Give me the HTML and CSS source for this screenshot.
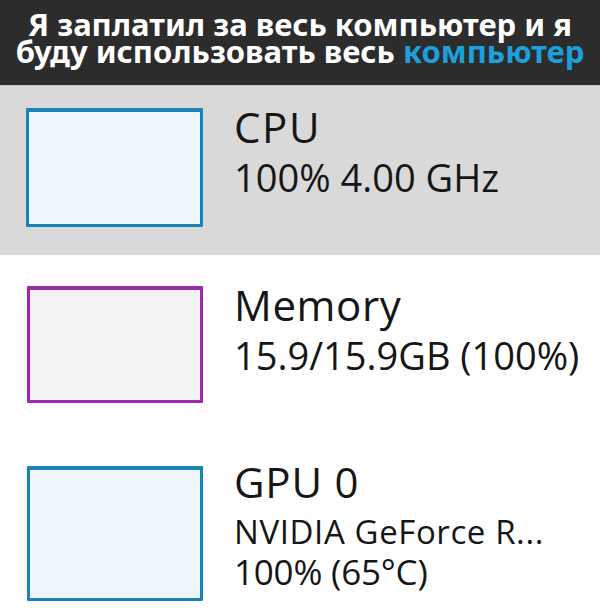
FILE: index.html
```html
<!DOCTYPE html>
<html lang="ru">
<head>
<meta charset="utf-8">
<title>Task Manager</title>
<link rel="stylesheet" href="styles.css">
</head>
<body>
<header class="header">
  <p class="line">Я заплатил за весь компьютер и я</p>
  <p class="line">буду использовать весь <span class="accent">компьютер</span></p>
</header>
<main class="list">
  <section class="row row-selected row-cpu">
    <div class="graph graph-blue"></div>
    <div class="info">
      <div class="title title-cpu">CPU</div>
      <div class="sub">100% 4.00 GHz</div>
    </div>
  </section>
  <section class="row row-mem">
    <div class="graph graph-purple"></div>
    <div class="info">
      <div class="title">Memory</div>
      <div class="sub">15.9/15.9GB (100%)</div>
    </div>
  </section>
  <section class="row row-gpu">
    <div class="graph graph-blue graph-tall"></div>
    <div class="info">
      <div class="title title-gpu">GPU 0</div>
      <div class="sub sub-name">NVIDIA GeForce R...</div>
      <div class="sub sub-last">100% (65°C)</div>
    </div>
  </section>
</main>
</body>
</html>
```
FILE: styles.css
```css
html, body {
  margin: 0;
  padding: 0;
  background: #ffffff;
  width: 600px;
  height: 613px;
  overflow: hidden;
}

.header {
  background: #2c2c2c;
  height: 86px;
  box-sizing: border-box;
  padding-top: 11px;
  border-bottom: 1px solid #c4c4c4;
  text-align: center;
  color: #ffffff;
  font-family: "Noto Sans", "DejaVu Sans", sans-serif;
  font-weight: 700;
  font-size: 31px;
  line-height: 27px;
}

.line {
  margin: 0;
  white-space: nowrap;
}

.accent {
  color: #1ca0dc;
}

.list {
  font-family: "Open Sans", "Noto Sans", sans-serif;
  color: #161616;
}

.row {
  display: flex;
  align-items: flex-start;
  gap: 31px;
  padding-left: 26px;
  box-sizing: border-box;
}

.row-selected {
  background: #d9d9d9;
}

.row-cpu {
  height: 169px;
  padding-top: 22px;
}

.row-mem {
  height: 185px;
  padding-top: 31px;
  padding-left: 27px;
}

.row-gpu {
  padding-top: 26px;
  padding-left: 27px;
}

.graph {
  width: 177px;
  height: 119px;
  box-sizing: border-box;
  border: 3px solid #1b84b6;
  border-top-width: 4px;
  background: #eef5fc;
  border-radius: 1px;
  flex: none;
}

.graph-purple {
  width: 176px;
  height: 117px;
  border-color: #9a2aa7;
  background: #f2f1f3;
}

.graph-tall {
  width: 176px;
  height: 135px;
}

.info {
  padding-top: 0;
}

.title {
  font-size: 42px;
  line-height: 37px;
  letter-spacing: 0.6px;
  white-space: nowrap;
}

.title-cpu {
  letter-spacing: 1.6px;
}

.title-gpu {
  font-size: 42px;
  line-height: 31px;
  letter-spacing: 0.8px;
}

.sub {
  font-size: 38px;
  line-height: 44px;
  margin-top: 10px;
  white-space: nowrap;
}

.sub-name {
  font-size: 33px;
  line-height: 40px;
  margin-top: 15px;
  letter-spacing: 0.6px;
}

.sub-last {
  font-size: 35px;
  line-height: 40px;
  margin-top: 0;
  letter-spacing: -0.2px;
}
```
